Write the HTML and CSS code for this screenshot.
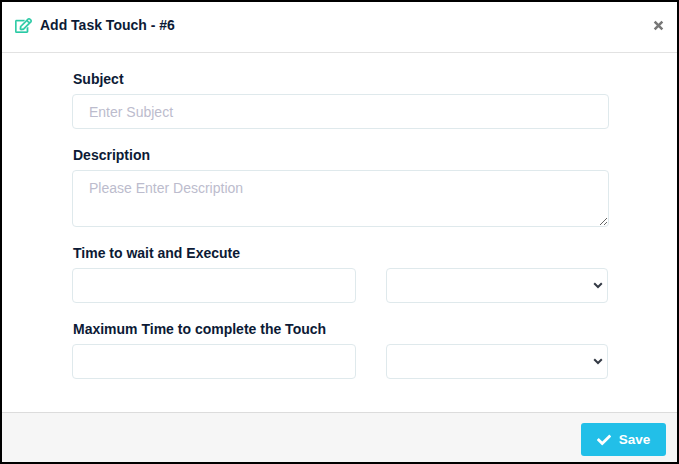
FILE: index.html
```html
<!DOCTYPE html>
<html lang="en">
<head>
<meta charset="utf-8">
<title>Add Task Touch</title>
<link rel="stylesheet" href="styles.css">
</head>
<body>
<form class="modal">
  <header class="modal-header">
    <svg class="edit-icon" viewBox="0 0 576 512" aria-hidden="true"><path d="M402.300 344.900l32-32c5-5 13.700-1.500 13.700 5.700V464c0 26.500-21.500 48-48 48H48c-26.500 0-48-21.500-48-48V112c0-26.500 21.500-48 48-48h273.500c7.100 0 10.700 8.600 5.700 13.700l-32 32c-1.500 1.500-3.500 2.300-5.700 2.300H48v352h352V350.500c0-2.100.8-4.100 2.300-5.600zm156.600-201.800L296.300 405.700l-90.400 10c-26.200 2.900-48.500-19.200-45.600-45.600l10-90.400L432.900 17.100c22.900-22.900 59.900-22.900 82.700 0l43.200 43.200c22.900 22.900 22.900 60 .1 82.800zM460.100 174L402 115.900 216.200 301.800l-7.300 65.300 65.300-7.300L460.100 174zm64.800-79.700l-43.200-43.200c-4.100-4.100-10.800-4.100-14.800 0L436 82l58.100 58.100 30.900-30.900c4-4.200 4-10.800-.1-14.900z"/></svg>
    <h1 class="title">Add Task Touch - #6</h1>
    <button class="close" type="button" aria-label="Close"><svg viewBox="0 0 10 10"><path d="M1.500 1.500l7 7M8.500 1.500l-7 7"/></svg></button>
  </header>
  <main class="modal-body">
    <div class="group">
      <label class="label" for="subject">Subject</label>
      <input class="control" id="subject" placeholder="Enter Subject">
    </div>
    <div class="group">
      <label class="label" for="description">Description</label>
      <textarea class="control area" id="description" placeholder="Please Enter Description"></textarea>
    </div>
    <div class="group">
      <label class="label" for="wait">Time to wait and Execute</label>
      <div class="row">
        <input class="control" id="wait">
        <div class="select"><select class="control"></select><svg class="chevron" viewBox="0 0 10 7"><path d="M1.200 1.300L5 5l3.800-3.700"/></svg></div>
      </div>
    </div>
    <div class="group">
      <label class="label" for="max">Maximum Time to complete the Touch</label>
      <div class="row">
        <input class="control" id="max">
        <div class="select"><select class="control"></select><svg class="chevron" viewBox="0 0 10 7"><path d="M1.200 1.300L5 5l3.800-3.700"/></svg></div>
      </div>
    </div>
  </main>
  <footer class="modal-footer">
    <button class="save" type="button"><svg viewBox="0 0 512 512"><path d="M173.900 439.400l-166.400-166.400c-10-10-10-26.200 0-36.200l36.200-36.200c10-10 26.200-10 36.200 0L192 312.700 432.100 72.600c10-10 26.200-10 36.200 0l36.200 36.200c10 10 10 26.200 0 36.200l-294.400 294.400c-10 10-26.200 10-36.200 0z"/></svg><span>Save</span></button>
  </footer>
</form>
</body>
</html>
```

FILE: styles.css
```css
* { box-sizing: border-box; }
body { margin: 0; font-family: "Liberation Sans", Arial, sans-serif; color: #0c1a35; }
.modal { display: flex; flex-direction: column; width: 679px; height: 464px; border: 2px solid #000; background: #fff; }
.modal-header { display: flex; align-items: center; height: 51px; padding: 0 13px 4px 13px; border-bottom: 1px solid #e2e2e2; }
.edit-icon { width: 17px; height: 15px; fill: #2bcaa5; stroke: #2bcaa5; stroke-width: 12; }
.title { margin: 0 auto 0 8px; font-size: 14px; line-height: 18px; }
.close { display: flex; padding: 0; border: 0; background: none; }
.close svg { width: 11px; height: 11px; fill: none; stroke: #777; stroke-width: 2.3; }
.modal-body { flex: 1; padding: 17px 68px 0 70px; }
.group { margin-bottom: 17px; }
.label { display: block; height: 24px; padding-left: 1px; font-size: 14px; font-weight: 700; line-height: 18px; white-space: nowrap; }
.control { display: block; width: 100%; height: 35px; margin: 0; padding: 0 16px; border: 1px solid #dfe9ec; border-radius: 4px; outline: 0; background: #fff; font: 14px/20px "Liberation Sans", Arial, sans-serif; color: #0c1a35; }
.control::placeholder { color: #bcbccd; opacity: 1; }
.area { height: 57px; padding-top: 7px; resize: vertical; }
.row { display: grid; grid-template-columns: 284px 222px; gap: 30px; }
.select { position: relative; }
.select .control { appearance: none; }
.chevron { position: absolute; top: 14px; right: 5px; width: 10px; height: 7px; fill: none; stroke: #343a45; stroke-width: 2; }
.modal-footer { display: flex; justify-content: flex-end; height: 50px; padding: 10px 11px 0 0; border-top: 1px solid #dcdcdc; background: #f6f6f6; }
.save { display: flex; align-items: center; justify-content: center; gap: 8px; width: 85px; height: 33px; padding: 0; border: 0; border-radius: 3px; background: #22bfe8; color: #fff; font: bold 13.5px/18px "Liberation Sans", Arial, sans-serif; }
.save svg { width: 14px; height: 14px; fill: currentColor; }
```
